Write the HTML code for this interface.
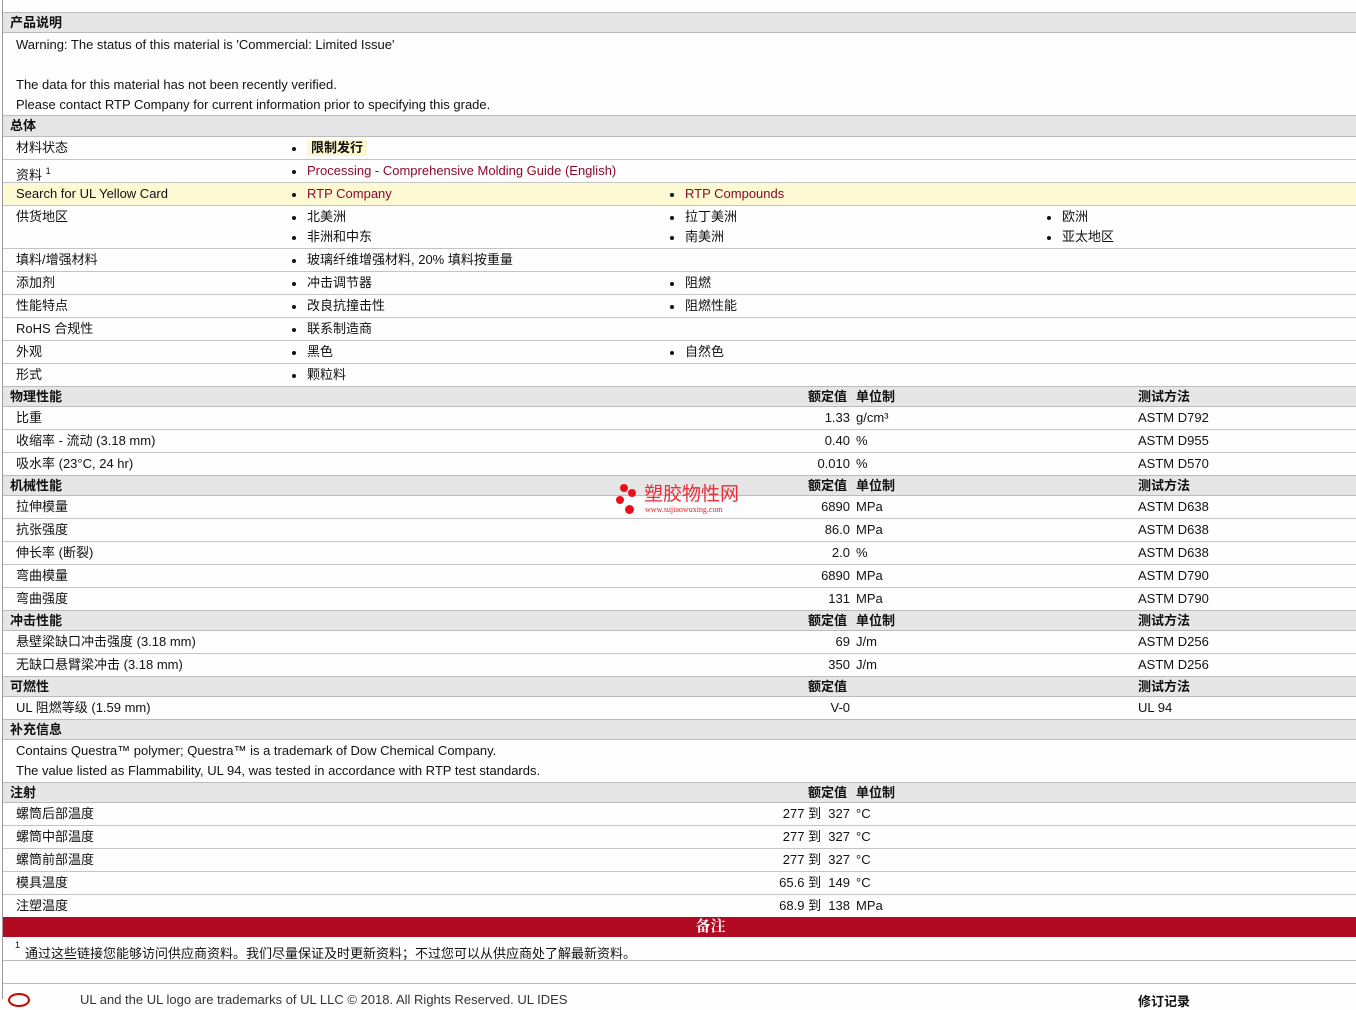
<!DOCTYPE html>
<html><head><meta charset="utf-8">
<style>
*{margin:0;padding:0;box-sizing:border-box}
body{width:1356px;height:999px;position:relative;background:#fdfefd;font-family:"Liberation Sans","Noto Sans CJK SC",sans-serif;font-size:13px;color:#111;overflow:hidden}
.lb{position:absolute;left:2px;top:0;width:1px;height:999px;background:#999}
.r{position:absolute;left:3px;width:1353px;border-bottom:1px solid #c4c4c4}
.h{background:#e6e6e6;font-weight:bold;border-top:1px solid #bbb;border-bottom:1px solid #bbb}
.r span{position:absolute;white-space:nowrap;line-height:22px;top:0}
.h span{line-height:19px}
.y{background:#fdf9d2}
.a{color:#8b0a2b}
.b::before{content:"";position:absolute;left:-15px;top:10px;width:4px;height:4px;border-radius:50%;background:#111}
.v{text-align:right;width:100px}
.t{position:absolute;white-space:nowrap}
</style></head><body>
<div class="lb"></div>
<div class="r h" style="top:12px;height:21px"><span style="left:7px">产品说明</span></div>
<span class="t" style="left:16px;top:37px">Warning: The status of this material is 'Commercial: Limited Issue'</span>
<span class="t" style="left:16px;top:77px">The data for this material has not been recently verified.</span>
<span class="t" style="left:16px;top:97px">Please contact RTP Company for current information prior to specifying this grade.</span>
<div class="r h" style="top:115px;height:22px"><span style="left:7px">总体</span></div>
<div class="r" style="top:137px;height:23px"><span style="left:13px">材料状态</span><span class="b" style="left:304px;top:0"></span><span style="left:304px;top:3px;font-weight:bold;background:#fbf7cf;padding:0 4px;line-height:16px">限制发行</span></div>
<div class="r" style="top:160px;height:23px"><span style="left:13px">资料 <sup style="font-size:9px">1</sup></span><span class="b a" style="left:304px">Processing - Comprehensive Molding Guide (English)</span></div>
<div class="r y" style="top:183px;height:23px"><span style="left:13px">Search for UL Yellow Card</span><span class="b a" style="left:304px">RTP Company</span><span class="b a" style="left:682px">RTP Compounds</span></div>
<div class="r" style="top:206px;height:43px"><span style="left:13px">供货地区</span><span class="b" style="left:304px">北美洲</span><span class="b" style="left:682px">拉丁美洲</span><span class="b" style="left:1059px">欧洲</span><span class="b" style="left:304px;top:20px">非洲和中东</span><span class="b" style="left:682px;top:20px">南美洲</span><span class="b" style="left:1059px;top:20px">亚太地区</span></div>
<div class="r" style="top:249px;height:23px"><span style="left:13px">填料/增强材料</span><span class="b" style="left:304px">玻璃纤维增强材料, 20% 填料按重量</span></div>
<div class="r" style="top:272px;height:23px"><span style="left:13px">添加剂</span><span class="b" style="left:304px">冲击调节器</span><span class="b" style="left:682px">阻燃</span></div>
<div class="r" style="top:295px;height:23px"><span style="left:13px">性能特点</span><span class="b" style="left:304px">改良抗撞击性</span><span class="b" style="left:682px">阻燃性能</span></div>
<div class="r" style="top:318px;height:23px"><span style="left:13px">RoHS 合规性</span><span class="b" style="left:304px">联系制造商</span></div>
<div class="r" style="top:341px;height:23px"><span style="left:13px">外观</span><span class="b" style="left:304px">黑色</span><span class="b" style="left:682px">自然色</span></div>
<div class="r" style="top:364px;height:22px;border-bottom:none"><span style="left:13px">形式</span><span class="b" style="left:304px">颗粒料</span></div>

<div class="r h" style="top:386px;height:21px"><span style="left:805px">额定值</span><span style="left:7px">物理性能</span><span style="left:853px">单位制</span><span style="left:1135px">测试方法</span></div>
<div class="r" style="top:407px;height:23px"><span style="left:13px">比重</span><span class="v" style="left:747px">1.33</span><span style="left:853px">g/cm³</span><span style="left:1135px">ASTM D792</span></div>
<div class="r" style="top:430px;height:23px"><span style="left:13px">收缩率 - 流动 (3.18 mm)</span><span class="v" style="left:747px">0.40</span><span style="left:853px">%</span><span style="left:1135px">ASTM D955</span></div>
<div class="r" style="top:453px;height:22px;border-bottom:none"><span style="left:13px">吸水率 (23°C, 24 hr)</span><span class="v" style="left:747px">0.010</span><span style="left:853px">%</span><span style="left:1135px">ASTM D570</span></div>

<div class="r h" style="top:475px;height:21px"><span style="left:7px">机械性能</span><span style="left:805px">额定值</span><span style="left:853px">单位制</span><span style="left:1135px">测试方法</span></div>
<div class="r" style="top:496px;height:23px"><span style="left:13px">拉伸模量</span><span class="v" style="left:747px">6890</span><span style="left:853px">MPa</span><span style="left:1135px">ASTM D638</span></div>
<div class="r" style="top:519px;height:23px"><span style="left:13px">抗张强度</span><span class="v" style="left:747px">86.0</span><span style="left:853px">MPa</span><span style="left:1135px">ASTM D638</span></div>
<div class="r" style="top:542px;height:23px"><span style="left:13px">伸长率 (断裂)</span><span class="v" style="left:747px">2.0</span><span style="left:853px">%</span><span style="left:1135px">ASTM D638</span></div>
<div class="r" style="top:565px;height:23px"><span style="left:13px">弯曲模量</span><span class="v" style="left:747px">6890</span><span style="left:853px">MPa</span><span style="left:1135px">ASTM D790</span></div>
<div class="r" style="top:588px;height:22px;border-bottom:none"><span style="left:13px">弯曲强度</span><span class="v" style="left:747px">131</span><span style="left:853px">MPa</span><span style="left:1135px">ASTM D790</span></div>

<div class="r h" style="top:610px;height:21px"><span style="left:7px">冲击性能</span><span style="left:805px">额定值</span><span style="left:853px">单位制</span><span style="left:1135px">测试方法</span></div>
<div class="r" style="top:631px;height:23px"><span style="left:13px">悬壁梁缺口冲击强度 (3.18 mm)</span><span class="v" style="left:747px">69</span><span style="left:853px">J/m</span><span style="left:1135px">ASTM D256</span></div>
<div class="r" style="top:654px;height:22px;border-bottom:none"><span style="left:13px">无缺口悬臂梁冲击 (3.18 mm)</span><span class="v" style="left:747px">350</span><span style="left:853px">J/m</span><span style="left:1135px">ASTM D256</span></div>

<div class="r h" style="top:676px;height:21px"><span style="left:7px">可燃性</span><span style="left:805px">额定值</span><span style="left:1135px">测试方法</span></div>
<div class="r" style="top:697px;height:22px;border-bottom:none"><span style="left:13px">UL 阻燃等级 (1.59 mm)</span><span class="v" style="left:747px">V-0</span><span style="left:1135px">UL 94</span></div>

<div class="r h" style="top:719px;height:21px"><span style="left:7px">补充信息</span></div>
<span class="t" style="left:16px;top:743px">Contains Questra™ polymer; Questra™ is a trademark of Dow Chemical Company.</span>
<span class="t" style="left:16px;top:763px">The value listed as Flammability, UL 94, was tested in accordance with RTP test standards.</span>

<div class="r h" style="top:782px;height:21px"><span style="left:7px">注射</span><span style="left:805px">额定值</span><span style="left:853px">单位制</span></div>
<div class="r" style="top:803px;height:23px"><span class="v" style="left:747px">277 到&nbsp; 327</span><span style="left:853px">°C</span><span style="left:13px">螺筒后部温度</span></div>
<div class="r" style="top:826px;height:23px"><span class="v" style="left:747px">277 到&nbsp; 327</span><span style="left:853px">°C</span><span style="left:13px">螺筒中部温度</span></div>
<div class="r" style="top:849px;height:23px"><span class="v" style="left:747px">277 到&nbsp; 327</span><span style="left:853px">°C</span><span style="left:13px">螺筒前部温度</span></div>
<div class="r" style="top:872px;height:23px"><span class="v" style="left:747px">65.6 到&nbsp; 149</span><span style="left:853px">°C</span><span style="left:13px">模具温度</span></div>
<div class="r" style="top:895px;height:22px;border-bottom:none"><span class="v" style="left:747px">68.9 到&nbsp; 138</span><span style="left:853px">MPa</span><span style="left:13px">注塑温度</span></div>
<div style="position:absolute;left:3px;top:917px;width:1353px;height:20px;background:#b20a22;color:#fff;font-weight:bold;font-size:15px;text-align:center;line-height:20px;font-family:'Liberation Serif','Noto Serif CJK SC',serif;padding-left:62px">备注</div>
<span class="t" style="left:15px;top:940px;font-size:9px">1</span>
<span class="t" style="left:25px;top:943px">通过这些链接您能够访问供应商资料。我们尽量保证及时更新资料；不过您可以从供应商处了解最新资料。</span>
<div style="position:absolute;left:3px;top:960px;width:1353px;height:1px;background:#bbb"></div>
<div style="position:absolute;left:3px;top:983px;width:1353px;height:1px;background:#bbb"></div>
<div style="position:absolute;left:8px;top:993px;width:22px;height:14px;border:2px solid #c00;border-radius:50%"></div>
<span class="t" style="left:80px;top:992px;color:#333">UL and the UL logo are trademarks of UL LLC © 2018. All Rights Reserved. UL IDES</span>
<span class="t" style="left:1138px;top:991px;font-weight:bold">修订记录</span>

<div style="position:absolute;left:616px;top:484px;width:130px;height:34px">
<div style="position:absolute;left:4px;top:0;width:8px;height:8px;border-radius:50%;background:#e8101a"></div>
<div style="position:absolute;left:12px;top:5px;width:8px;height:8px;border-radius:50%;background:#e8101a"></div>
<div style="position:absolute;left:0;top:12px;width:8px;height:8px;border-radius:50%;background:#e8101a"></div>
<div style="position:absolute;left:9px;top:21px;width:9px;height:9px;border-radius:50%;background:#e8101a"></div>
<span style="position:absolute;left:28px;top:0;font-size:19px;color:#e8303a;line-height:22px;white-space:nowrap">塑胶物性网</span>
<span style="position:absolute;left:29px;top:21px;font-size:8px;color:#d22;font-family:'Liberation Serif',serif;white-space:nowrap">www.sujiaowuxing.com</span>
</div>
</body></html>
